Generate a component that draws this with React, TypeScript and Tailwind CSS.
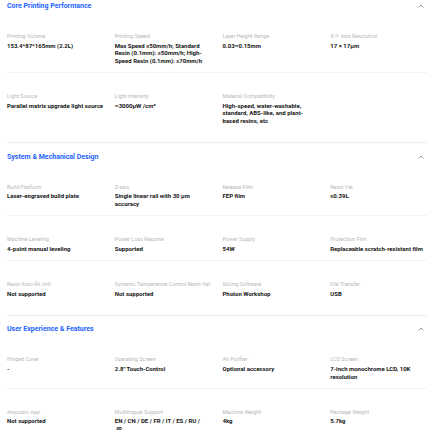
import React from 'react';

type Spec = { label: string; value: string; narrow?: boolean };

interface Section {
  title: string;
  rows: Spec[][];
}

const sections: Section[] = [
  {
    title: 'Core Printing Performance',
    rows: [
      [
        { label: 'Printing Volume', value: '153.4*87*165mm (2.2L)' },
        {
          label: 'Printing Speed',
          value: 'Max Speed ≤50mm/h; Standard Resin (0.1mm): ≤50mm/h; High-Speed Resin (0.1mm): ≤70mm/h',
        },
        { label: 'Layer Height Range', value: '0.03~0.15mm' },
        { label: 'X/Y Axis Resolution', value: '17 × 17μm' },
      ],
      [
        { label: 'Light Source', value: 'Parallel matrix upgrade light source' },
        { label: 'Light Intensity', value: '~3000μW /cm²' },
        {
          label: 'Material Compatibility',
          value: 'High-speed, water-washable, standard, ABS-like, and plant-based resins, etc',
        },
      ],
    ],
  },
  {
    title: 'System & Mechanical Design',
    rows: [
      [
        { label: 'Build Platform', value: 'Laser-engraved build plate' },
        { label: 'Z-axis', value: 'Single linear rail with 30 μm accuracy' },
        { label: 'Release Film', value: 'FEP film' },
        { label: 'Resin Vat', value: '≤0.39L' },
      ],
      [
        { label: 'Machine Leveling', value: '4-point manual leveling' },
        { label: 'Power Loss Resume', value: 'Supported' },
        { label: 'Power Supply', value: '54W' },
        { label: 'Protection Film', value: 'Replaceable scratch-resistant film' },
      ],
      [
        { label: 'Resin Auto-fill Unit', value: 'Not supported' },
        { label: 'Dynamic Temperature Control Resin Vat', value: 'Not supported' },
        { label: 'Slicing Software', value: 'Photon Workshop' },
        { label: 'File Transfer', value: 'USB' },
      ],
    ],
  },
  {
    title: 'User Experience & Features',
    rows: [
      [
        { label: 'Hinged Cover', value: '-' },
        { label: 'Operating Screen', value: '2.8" Touch-Control' },
        { label: 'Air Purifier', value: 'Optional accessory' },
        { label: 'LCD Screen', value: '7-inch monochrome LCD, 10K resolution' },
      ],
      [
        { label: 'Anycubic App', value: 'Not supported' },
        { label: 'Multilingual Support', value: 'EN / CN / DE / FR / IT / ES / RU / JP', narrow: true },
        { label: 'Machine Weight', value: '4kg' },
        { label: 'Package Weight', value: '5.7kg' },
      ],
    ],
  },
];

function ChevronUp() {
  return (
    <svg width="6" height="4" viewBox="0 0 6 4" fill="none" className="mr-[3px] text-[#8a8a8a]">
      <path d="M0.6 3.4 3 1 5.4 3.4" stroke="currentColor" strokeWidth="0.9" />
    </svg>
  );
}

function SpecSection({ section, first }: { section: Section; first?: boolean }) {
  return (
    <section className="border-b border-[#ececec] pb-[10px]">
      {/* Header */}
      <div className={`flex items-center justify-between pb-px ${first ? 'pt-px' : 'pt-[8.5px]'}`}>
        <h2 className="text-[7px] leading-[10px] font-bold text-[#1d63ff]">{section.title}</h2>
        <ChevronUp />
      </div>

      {/* Rows */}
      {section.rows.map((row, i) => (
        <div
          key={i}
          className={`grid grid-cols-4 gap-x-[11px] border-t pt-[20px] pb-[7.5px] ${i > 0 ? 'border-[#f3f3f3]' : 'border-transparent'}`}
        >
          {row.map((spec) => (
            <div key={spec.label}>
              <div className="text-[5.4px] leading-[6px] text-[#b8b8b8] whitespace-nowrap">{spec.label}</div>
              <div
                className={`mt-[2.75px] text-[6px] leading-[7.6px] font-bold text-[#151515] ${spec.narrow ? 'max-w-[88px]' : ''}`}
              >
                {spec.value}
              </div>
            </div>
          ))}
        </div>
      ))}
    </section>
  );
}

export default function App() {
  return (
    <div className="min-h-screen bg-white pl-[7px] pr-[3px]" style={{ fontFamily: 'Roboto, "Liberation Sans", sans-serif' }}>
      {sections.map((s, i) => (
        <SpecSection key={s.title} section={s} first={i === 0} />
      ))}
    </div>
  );
}
